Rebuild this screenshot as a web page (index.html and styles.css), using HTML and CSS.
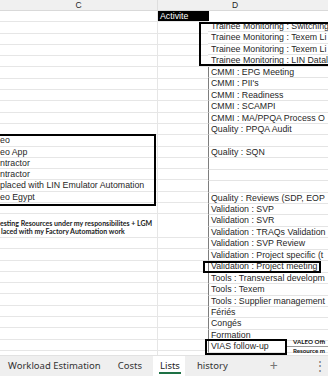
FILE: index.html
```html
<!DOCTYPE html>
<html lang="en">

<head>
    <meta charset="UTF-8">
    <meta name="viewport" content="width=device-width, initial-scale=1.0">
    <title>Lists</title>
    <link rel="stylesheet" href="styles.css">
</head>

<body>
    <div class="window">
        <div class="sheet">
            <div class="grid">
                <div class="row head">
                    <div class="cell c">C</div>
                    <div class="cell d">D</div>
                    <div class="cell e"></div>
                </div>
                <div class="row">
                    <div class="cell c"></div>
                    <div class="cell d"><span class="title">Activite</span></div>
                    <div class="cell e"></div>
                </div>
                <div class="row"><div class="cell c"></div><div class="cell d"></div><div class="cell e"></div></div>
                <div class="row"><div class="cell c"></div><div class="cell d"></div><div class="cell e"></div></div>
                <div class="row"><div class="cell c"></div><div class="cell d"></div><div class="cell e"></div></div>
                <div class="row"><div class="cell c"></div><div class="cell d"></div><div class="cell e"></div></div>
                <div class="row"><div class="cell c"></div><div class="cell d"></div><div class="cell e"></div></div>
                <div class="row"><div class="cell c"></div><div class="cell d"></div><div class="cell e"></div></div>
                <div class="row"><div class="cell c"></div><div class="cell d"></div><div class="cell e"></div></div>
                <div class="row"><div class="cell c"></div><div class="cell d"></div><div class="cell e"></div></div>
                <div class="row"><div class="cell c"></div><div class="cell d"></div><div class="cell e"></div></div>
                <div class="row"><div class="cell c"></div><div class="cell d"></div><div class="cell e"></div></div>
                <div class="row"><div class="cell c">eo</div><div class="cell d"></div><div class="cell e"></div></div>
                <div class="row"><div class="cell c">eo App</div><div class="cell d"></div><div class="cell e"></div></div>
                <div class="row"><div class="cell c">ntractor</div><div class="cell d"></div><div class="cell e"></div></div>
                <div class="row"><div class="cell c">ntractor</div><div class="cell d"></div><div class="cell e"></div></div>
                <div class="row"><div class="cell c">placed with LIN Emulator Automation</div><div class="cell d"></div><div class="cell e"></div></div>
                <div class="row"><div class="cell c">eo Egypt</div><div class="cell d"></div><div class="cell e"></div></div>
                <div class="row"><div class="cell c"></div><div class="cell d"></div><div class="cell e"></div></div>
                <div class="row tall">
                    <div class="cell c small">
                        <span>esting Resources under my responsibilites + LGM</span>
                        <span>laced with my Factory Automation work</span>
                    </div>
                    <div class="cell d"></div>
                    <div class="cell e"></div>
                </div>
                <div class="row"><div class="cell c"></div><div class="cell d"></div><div class="cell e"></div></div>
                <div class="row"><div class="cell c"></div><div class="cell d"></div><div class="cell e"></div></div>
                <div class="row"><div class="cell c"></div><div class="cell d"></div><div class="cell e"></div></div>
                <div class="row"><div class="cell c"></div><div class="cell d"></div><div class="cell e"></div></div>
                <div class="row"><div class="cell c"></div><div class="cell d"></div><div class="cell e"></div></div>
                <div class="row"><div class="cell c"></div><div class="cell d"></div><div class="cell e"></div></div>
                <div class="row"><div class="cell c"></div><div class="cell d"></div><div class="cell e"></div></div>
                <div class="row"><div class="cell c"></div><div class="cell d"></div><div class="cell e"></div></div>
                <div class="row"><div class="cell c"></div><div class="cell d"></div><div class="cell e"></div></div>
                <div class="row"><div class="cell c"></div><div class="cell d"></div><div class="cell e"></div></div>
                <div class="row"><div class="cell c"></div><div class="cell d"></div><div class="cell e"></div></div>
            </div>

            <div class="frame frame-left"></div>

            <ul class="list">
                <li class="plain">Trainee Monitoring : Switching</li>
                <li class="plain">Trainee Monitoring : Texem Li</li>
                <li class="plain">Trainee Monitoring : Texem Li</li>
                <li class="plain">Trainee Monitoring : LIN Datal</li>
                <li>CMMI : EPG Meeting</li>
                <li>CMMI : PII's</li>
                <li>CMMI : Readiness</li>
                <li>CMMI : SCAMPI</li>
                <li>CMMI : MA/PPQA Process O</li>
                <li>Quality : PPQA Audit</li>
                <li></li>
                <li>Quality : SQN</li>
                <li></li>
                <li></li>
                <li></li>
                <li>Quality : Reviews (SDP, EOP</li>
                <li>Validation : SVP</li>
                <li>Validation : SVR</li>
                <li>Validation : TRAQs Validation</li>
                <li>Validation : SVP Review</li>
                <li>Validation : Project specific (t</li>
                <li>Validation : Project meeting</li>
                <li>Tools : Transversal developm</li>
                <li>Tools : Texem</li>
                <li>Tools : Supplier management</li>
                <li>Fériés</li>
                <li>Congés</li>
                <li>Formation</li>
                <li>VIAS follow-up</li>
                <li></li>
            </ul>

            <div class="frame frame-trainee"></div>
            <div class="frame frame-meeting"></div>
            <div class="frame frame-vias"></div>

            <div class="note">
                <span class="note-top">VALEO Offi</span>
                <span>Resource m</span>
            </div>
        </div>

        <div class="tabs">
            <div class="tab">Workload Estimation</div>
            <div class="tab">Costs</div>
            <div class="tab active">Lists</div>
            <div class="tab">history</div>
            <div class="tab-add">+</div>
            <div class="tab-more">&#8942;</div>
        </div>
    </div>
</body>
</html>
```

FILE: styles.css
```css
* {
    margin: 0;
    padding: 0;
    box-sizing: border-box;
    font-family: 'Liberation Sans', Arial, sans-serif;
}

body {
    background-color: white;
    overflow: hidden;
}

.window {
    width: 328px;
    height: 376px;
    display: flex;
    flex-direction: column;
    overflow: hidden;
}

.sheet {
    position: relative;
    height: 355px;
    overflow: hidden;
}

/* spreadsheet grid, column C starts off screen */
.grid {
    margin-left: -14px;
}

.row {
    display: flex;
    height: 11.3px;
    border-bottom: 1px solid #e6e6e6;
}

.row.tall {
    height: 23.6px;
}

.row.head {
    height: 11px;
    background-color: #f0f0f0;
    border-bottom: 1px solid #d9d9d9;
    color: #666;
}

.head .cell {
    text-align: center;
    padding: 0;
    border-right: none;
    font-size: 8.5px;
    line-height: 10px;
}

.head .cell.c {
    border-right: 1px solid #dedede;
}

.cell {
    font-size: 8.8px;
    line-height: 10.3px;
    color: #1f1f1f;
    white-space: nowrap;
    overflow: hidden;
}

.cell.c {
    width: 172px;
    padding-left: 14px;
    border-right: 1px solid #e6e6e6;
}

.cell.d {
    width: 154px;
}

.cell.e {
    flex: 1;
}

.title {
    display: block;
    width: 51px;
    height: 100%;
    padding-left: 2px;
    background-color: #000;
    color: white;
}

.cell.small {
    display: flex;
    flex-direction: column;
    justify-content: flex-end;
    padding-bottom: 1px;
    padding-left: 14px;
}

.cell.small span {
    font-family: Lato, 'Liberation Sans', sans-serif;
    font-size: 7px;
    font-weight: bold;
    line-height: 8.6px;
    color: #222;
}

.cell.small span + span {
    padding-left: 1px;
}

/* activity list pasted next to the grid */
.list {
    position: absolute;
    left: 208px;
    top: 21px;
    right: 0;
    list-style: none;
    background-color: white;
}

.list li {
    height: 11.45px;
    line-height: 10.45px;
    font-size: 8.8px;
    color: #1f1f1f;
    padding-left: 2px;
    border-left: 1px solid #7d7d7d;
    border-bottom: 1px solid #e4e4e4;
    white-space: nowrap;
    overflow: hidden;
}

.list li.plain {
    border-left: none;
    padding-left: 3px;
}

.frame {
    position: absolute;
    border: 2px solid #000;
}

.frame-left {
    left: -4px;
    top: 134px;
    width: 160px;
    height: 72px;
}

.frame-trainee {
    left: 199px;
    top: 22px;
    width: 140px;
    height: 44px;
}

.frame-meeting {
    left: 203px;
    top: 261px;
    width: 118px;
    height: 12px;
}

.frame-vias {
    left: 205px;
    top: 339px;
    width: 82px;
    height: 16px;
}

.note {
    position: absolute;
    left: 287px;
    top: 337px;
    right: 0;
    display: flex;
    flex-direction: column;
}

.note span {
    font-family: Lato, 'Liberation Sans', sans-serif;
    font-size: 6.2px;
    font-weight: bold;
    line-height: 8px;
    padding-left: 6px;
    white-space: nowrap;
    color: #111;
}

.note .note-top {
    height: 10px;
    line-height: 10px;
    border-bottom: 1px solid #9a9a9a;
}

/* sheet tabs */
.tabs {
    display: flex;
    align-items: stretch;
    height: 21px;
    background-color: #efefef;
    border-top: 1px solid #e2e2e2;
}

.tab {
    padding: 0 9px 0 8px;
    font-family: 'Noto Sans', sans-serif;
    font-size: 9.5px;
    line-height: 20px;
    color: #333;
    white-space: nowrap;
}

.tab.active {
    position: relative;
    background-color: white;
    color: #222;
    padding: 0 5px 0 7px;
    margin-left: 2px;
}

.tab.active::after {
    content: '';
    position: absolute;
    left: 6px;
    right: 4px;
    bottom: 2px;
    height: 2px;
    background-color: #1e7145;
}

.tab.active + .tab {
    padding-left: 12px;
}

.tab-add {
    margin-left: 33px;
    font-family: 'Noto Sans', sans-serif;
    font-size: 14px;
    line-height: 19px;
    color: #777;
}

.tab-more {
    margin-left: auto;
    padding-right: 2px;
    font-size: 12px;
    line-height: 20px;
    color: #777;
}
```
